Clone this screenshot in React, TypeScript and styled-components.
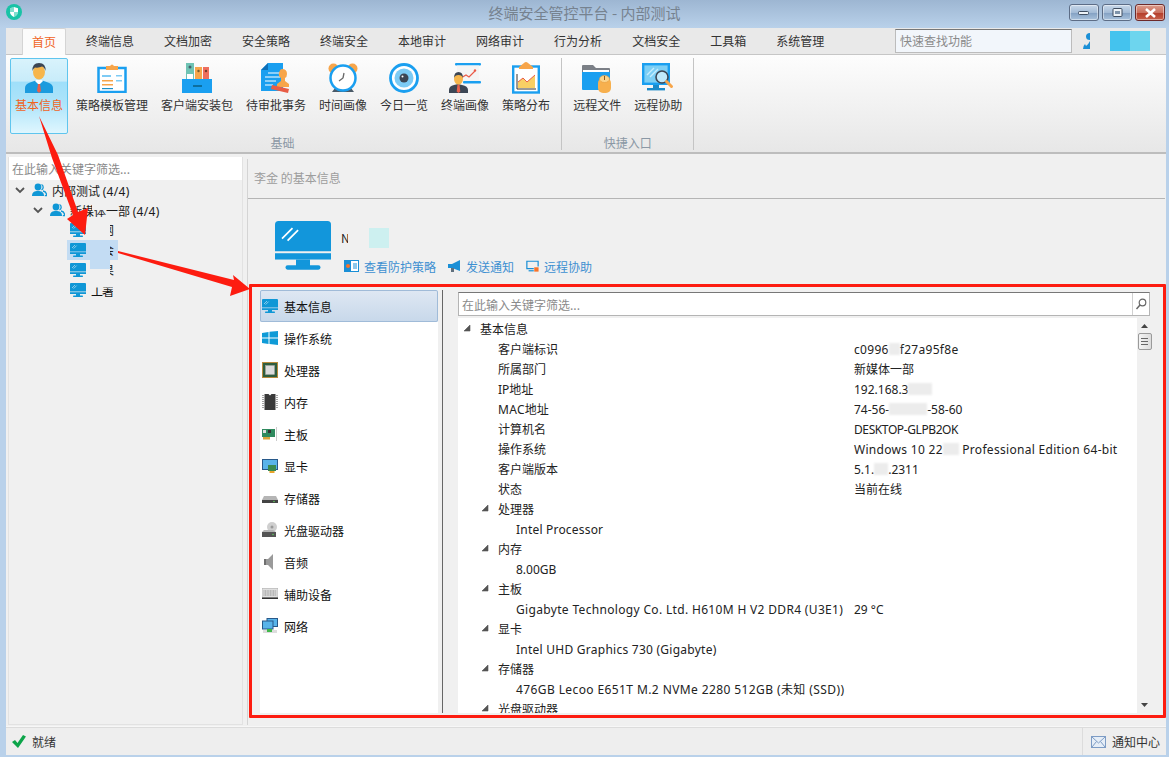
import React from "react";
import styled, { createGlobalStyle } from "styled-components";

const Global = createGlobalStyle`
  html, body { margin: 0; padding: 0; height: 100%; overflow: hidden; }
  body { font-family: "Noto Sans CJK SC", "Liberation Sans", sans-serif; font-size: 12px; color: #222; }
  * { box-sizing: border-box; }
`;

const Win = styled.div`
  position: relative; width: 1169px; height: 757px; display: flex; flex-direction: column;
  background: #b9d1ea; overflow: hidden;
`;
const TitleBar = styled.div`
  height: 28px; flex: none; display: flex; align-items: center; justify-content: space-between;
  padding: 0 4px 4px 6px; position: relative;
  background: linear-gradient(#9db6d2, #b9d1ea);
`;
const WinTitle = styled.div`
  position: absolute; left: 0; right: 0; top: 2px; text-align: center; font-size: 15px; line-height: 22px; color: #76828f;
`;
const WinButtons = styled.div`display: flex; gap: 3px; position: relative; margin-top: 1px;`;
const WinBtn = styled.div<{ $close?: boolean }>`
  width: 30px; height: 17px; border-radius: 3px; border: 1px solid ${p => (p.$close ? "#6d2a2a" : "#5d6d86")};
  display: flex; align-items: center; justify-content: center;
  background: ${p => p.$close ? "linear-gradient(#dd9c8c, #c9705e 50%, #b43f2c 55%, #c8604a)" : "linear-gradient(#c8d8ea, #a3bbd6 50%, #85a2c4 55%, #a9c2dc)"};
  box-shadow: inset 0 0 0 1px rgba(255,255,255,.45);
`;
const Body = styled.div`flex: 1; min-height: 0; margin: 0 3px 2px 6px; display: flex; flex-direction: column; background: #f0f0f0;`;
const TabBar = styled.div`
  height: 27px; flex: none; display: flex; align-items: flex-end; background: #e9e9e9; border-bottom: 1px solid #c6c6c6; padding-left: 16px; position: relative;
`;
const Tab = styled.div<{ $active?: boolean }>`
  height: ${p => (p.$active ? "27px" : "26px")}; line-height: 25px; padding: 0 ${p => (p.$active ? "10px" : "15px")};
  margin-right: ${p => (p.$active ? "5px" : "0")}; margin-bottom: ${p => (p.$active ? "-1px" : "0")};
  color: ${p => (p.$active ? "#f0641e" : "#333")};
  ${p => p.$active ? "background:#fbfbfb;border:1px solid #d4d4d4;border-bottom:none;border-radius:2px 2px 0 0;padding:0 9px;" : ""}
`;
const TabRight = styled.div`margin-left: auto; display: flex; align-items: center; height: 26px; padding-bottom: 1px;`;
const QuickFind = styled.div`
  width: 177px; height: 24px; margin-right: 11px; background: #f2f6fb; border: 1px solid #bcbcbc; border-top-color: #777; color: #8a8a8a; line-height: 21px; padding-left: 4px;
`;
const Patch = styled.div<{ $c: string; $w?: number; $h?: number }>`
  width: ${p => p.$w ?? 20}px; height: ${p => p.$h ?? 20}px; background: ${p => p.$c}; flex: none;
`;
const PatchGroup = styled.div`display: flex; margin: 0 16px 0 20px;`;

const Ribbon = styled.div`
  height: 99px; flex: none; display: flex; padding: 3px 0 0 4px; background: linear-gradient(#fdfdfd, #e7e7e7); border-bottom: 2px solid #bdbdbd;
`;
const RibbonGroup = styled.div`
  display: flex; flex-direction: column; align-items: stretch; height: 92px; padding-right: 6px; margin-right: 6px; border-right: 1px solid #c4c4c4;
`;
const RibbonItems = styled.div`display: flex; gap: 3px; height: 76px;`;
const GroupLabel = styled.div`text-align: center; color: #8b98a5; line-height: 18px; height: 16px;`;
const RibbonItem = styled.div<{ $active?: boolean }>`
  display: flex; flex-direction: column; align-items: center; height: 76px; padding: 3px 4px 0; border: 1px solid transparent; border-radius: 2px;
  color: #333; white-space: nowrap;
  ${p => p.$active ? `
    color: #f0641e; border-color: #5fc5ee;
    background: linear-gradient(#d9f3fc 0, #c8ecfa 30%, #9fdffa 31%, #ade4fa 60%, #dff6fe 100%);
  ` : ""}
`;
const RibbonIcon = styled.div`width: 34px; height: 32px; display: flex; align-items: center; justify-content: center;`;
const RibbonText = styled.div`line-height: 18px; margin-top: 2px;`;

const Main = styled.div`flex: 1; min-height: 0; display: flex; padding: 3px 1px 2px 2px; gap: 4px;`;
const LeftPanel = styled.div`width: 235px; flex: none; border: 1px solid #e2e2e2; border-top: none; background: #f0f0f0; display: flex; flex-direction: column;`;
const LeftFilter = styled.div`height: 23px; background: #fff; color: #8a8a8a; line-height: 23px; padding-left: 3px; flex: none;`;
const Tree = styled.div`padding-top: 0;`;
const TreeRow = styled.div<{ $level: number }>`
  position: relative; height: 20px; display: flex; align-items: center; padding-left: ${p => p.$level}px; white-space: pre; color: #1a1a1a;
`;
const TreeLabel = styled.span`line-height: 22px; height: 20px;`;
const Chevron = styled.svg`flex: none; margin-right: 7px;`;
const TreeIcon = styled.svg`flex: none; margin-right: 5px;`;
const Selection = styled.div`
  position: absolute; left: 58px; top: 0; width: 51px; height: 20px; background: #c3dcf3;
  &::after { content: ""; position: absolute; left: 23px; top: 9px; width: 20px; height: 20px; background: #c3dcf3; }
`;
const Clip = styled.span<{ $w: number; $left: number }>`
  display: inline-block; width: ${p => p.$w}px; overflow: hidden; margin-left: ${p => p.$left}px; position: relative; z-index: 1; line-height: 14px; height: 14px; color: #222;
  direction: rtl;
`;
const HostName = styled.span`margin-left: 5px; position: relative; z-index: 1; color: #111; letter-spacing: -1px; clip-path: inset(6px 0 0 0);`;
const GroupSmudge = styled.span`
  position: absolute; left: 83px; top: 2px; width: 18px; height: 8px; background: #f0f0f0;
`;
const Latin = styled.span<{ $t?: number }>`
  font-family: "Noto Sans", "Noto Sans CJK SC", sans-serif; letter-spacing: ${p => p.$t ?? 0}px;
  line-height: 16px;
`;

const RightPanel = styled.div`flex: 1; min-width: 0; display: flex; flex-direction: column; border-left: 1px solid #d4d4d4; margin-top: 2px;`;
const PanelHead = styled.div`height: 40px; flex: none; border-bottom: 1px solid #b5b5b5; color: #9d9d9d; line-height: 38px; padding-left: 6px;`;
const Profile = styled.div`height: 91px; flex: none; display: flex; padding: 22px 0 0 27px;`;
const ProfileCol = styled.div`display: flex; flex-direction: column; margin-left: 10px;`;
const NameRow = styled.div`display: flex; align-items: center; height: 30px; padding-top: 4px;`;
const NamePiece = styled.span`width: 7px; overflow: hidden; height: 18px; line-height: 17px; font-size: 12px; color: #222; margin-right: 21px; clip-path: inset(2px 0 2px 0);`;
const Actions = styled.div`display: flex; margin-top: 5px; padding-left: 3px; height: 20px; align-items: center;`;
const ActionLink = styled.div`display: flex; align-items: center; gap: 5px; color: #3d8fd1; margin-right: 12px; white-space: nowrap;`;
const Detail = styled.div`flex: 1; min-height: 0; display: flex; padding: 0 0 12px 12px;`;
const SideList = styled.div`width: 178px; flex: none; background: #fff; display: flex; flex-direction: column;`;
const SideItem = styled.div<{ $active?: boolean }>`
  height: 32px; flex: none; display: flex; align-items: center; gap: 6px; padding-left: 2px; color: #111; border-radius: 2px;
  ${p => p.$active ? "background:linear-gradient(#dfe8f3,#c7d8ea);box-shadow:inset 0 0 0 1px #a0bbd8;" : ""}
`;
const VLine = styled.div`width: 1px; flex: none; background: #666; margin: 0 15px 0 4px;`;
const RightCol = styled.div`flex: 1; min-width: 0; display: flex; flex-direction: column; padding-top: 2px; padding-right: 15px;`;
const Search = styled.div`
  height: 24px; flex: none; width: 692px; background: #fff; border: 1px solid #b4b4b4; border-top-color: #777; display: flex; align-items: center; justify-content: space-between; color: #8a8a8a; padding-left: 3px;
`;
const SearchBtn = styled.div`width: 17px; height: 22px; border-left: 1px solid #d0d0d0; display: flex; align-items: center; justify-content: center;`;
const ScrollWrap = styled.div`flex: 1; min-height: 0; display: flex; margin-top: 2px;`;
const InfoTree = styled.div`width: 679px; flex: none; background: #fff; overflow: hidden; `;
const InfoRow = styled.div`height: 20px; line-height: 22px; display: grid; grid-template-columns: 396px 1fr; grid-template-rows: 20px; align-items: start; white-space: pre; color: #222;`;
const InfoKey = styled.div<{ $level: number }>`padding-left: ${p => 22 + p.$level * 18}px; position: relative; height: 20px;`;
const InfoValue = styled.div`height: 20px;`;
const Expander = styled.svg`position: absolute; top: 6px; margin-left: -17px;`;
const Smudge = styled.span<{ $w: number }>`
  display: inline-block; width: ${p => p.$w}px; height: 12px; vertical-align: -1px; background: #ececec; filter: blur(1px);
`;
const Scrollbar = styled.div`width: 15px; flex: none; display: flex; flex-direction: column; align-items: center; padding-top: 6px; position: relative; background: #f0f0f0;`;
const ThumbBox = styled.div`
  width: 14px; height: 17px; margin-top: 5px; border: 1px solid #9a9a9a; border-radius: 2px; background: linear-gradient(90deg,#f4f4f4,#dcdcdc); display: flex; flex-direction: column; align-items: center; justify-content: center; gap: 2px;
  & > i { display: block; width: 7px; height: 1px; background: #666; }
`;
const ScrollDown = styled.svg`position: absolute; bottom: 6px; left: 4px;`;

const Status = styled.div`height: 28px; flex: none; background: #eeeeee; border-top: 1px solid #dcdcdc; display: flex; align-items: center; padding-left: 6px; box-shadow: 0 -1px 0 #f7f7f7;`;
const StatusText = styled.span`margin-left: 6px; color: #333;`;
const Notify = styled.div`margin-left: auto; height: 100%; width: 84px; border-left: 1px solid #dcdcdc; display: flex; align-items: center; gap: 6px; padding-left: 8px; color: #333; white-space: nowrap;`;

const RedFrame = styled.div`position: absolute; left: 249px; top: 284px; width: 917px; height: 434px; border: 3px solid #fd1c10; border-radius: 1px; pointer-events: none; z-index: 5;`;
const Arrows = styled.svg`position: absolute; left: 0; top: 0; z-index: 6; pointer-events: none;`;

const B = "#1a9ff0";
const Monitor = ({ s = 16, c = "#0f97d6" }: { s?: number; c?: string }) => (
  <svg width={s} height={s * 0.87} viewBox="0 0 16 13.9" style={{ flex: "none", position: "relative", zIndex: 1 }}>
    <path d="M0 1q0-1 1-1h14q1 0 1 1v7.600H0z" fill={c} />
    <path d="M2 5l3-3M3.600 5.600l3-3" stroke="#fff" strokeWidth=".5" />
    <rect y="9.200" width="16" height="1.800" fill={c} />
    <rect x="6" y="11" width="4" height="2" fill={c} />
    <rect x="3" y="12.600" width="10" height="1.300" rx=".6" fill={c} />
  </svg>
);
const People = () => (
  <TreeIcon width="15" height="14" viewBox="0 0 15 14">
    <circle cx="6" cy="4" r="3.400" fill="#0f97d6" />
    <path d="M0 13c0-4 2.500-5 6-5s6 1 6 5z" fill="#0f97d6" />
    <path d="M9.500 1.500a3 3 0 0 1 0 5.400M11 8c2.400.4 3.600 2 3.600 4.600h-1.800" fill="none" stroke="#0f97d6" strokeWidth="1.300" />
  </TreeIcon>
);
const Down = () => (
  <Chevron width="10" height="7" viewBox="0 0 10 7"><path d="M1 1l4 4 4-4" fill="none" stroke="#555" strokeWidth="1.800" /></Chevron>
);

const IPerson = () => (
  <svg width="30" height="30" viewBox="0 0 30 30">
    <path d="M1 30v-5q0-4 5-5.500l5-1.700h8l5 1.700q5 1.500 5 5.500v5z" fill="#1b9bde" />
    <path d="M11 18l4 4 4-4-1-1h-6z" fill="#fff" />
    <path d="M14 21h2l1 7-2 2-2-2z" fill="#e8604c" />
    <ellipse cx="15" cy="9" rx="6" ry="7.500" fill="#f6b64c" />
    <path d="M8.500 8q-.5-8 6.500-8t6.500 8q-1-4-3.500-4.500-3 1.500-7 1-2 1-2.500 3.500z" fill="#3c4654" />
  </svg>
);
const IClip = () => (
  <svg width="30" height="30" viewBox="0 0 30 30">
    <rect x="1.500" y="5" width="27" height="24" fill="#fff" stroke={B} strokeWidth="2.500" />
    <path d="M9 7V3h4q2-3 4 0h4v4z" fill="#f7a54a" />
    <path d="M5 12h9v2H5z" fill="#7ecbf5" /><path d="M5 17h11v1.500H5z" fill="#f7a54a" /><path d="M5 21h11v1.500H5z" fill="#f7a54a" /><path d="M5 25h11v1.200H5z" fill="#1a8fc9" />
    <path d="M19 12h6v1.500h-6zM19 17h6v1.500h-6z" fill="#7ecbf5" />
  </svg>
);
const IBinder = () => (
  <svg width="30" height="30" viewBox="0 0 30 30">
    <rect x="4" y="0" width="8" height="18" fill="#6fc3b4" /><rect x="13" y="4" width="7" height="14" fill="#f7a54a" /><rect x="21" y="4" width="6" height="14" fill="#ee6e5e" />
    <circle cx="8" cy="4" r="1.500" fill="#45606a" /><circle cx="16.500" cy="8" r="1.200" fill="#7a5a2a" /><circle cx="24" cy="8" r="1.200" fill="#7a3a2a" />
    <rect x="5" y="11" width="6" height="5" fill="#fff" />
    <rect x="0" y="16" width="30" height="14" fill={B} /><rect x="11" y="22" width="9" height="2" fill="#0d6f9e" />
  </svg>
);
const IDoc = () => (
  <svg width="30" height="30" viewBox="0 0 30 30">
    <path d="M7 0h15v28H0V7z" fill={B} /><path d="M7 0v7H0z" fill="#0d6fb8" />
    <path d="M7 10h12M4 14h15M4 18h11M4 22h8" stroke="#fff" strokeWidth="1.200" />
    <path d="M21 6q5 0 5 5 0 3-2 4v3l4 3v3H16v-3l4-3v-3q-3-2-2-5 1-4 3-4z" fill="#f7a54a" />
    <path d="M11 22l17 4-1 4-17-4z" fill="#e85d46" />
  </svg>
);
const IClock = () => (
  <svg width="30" height="30" viewBox="0 0 30 30">
    <circle cx="5.500" cy="5.500" r="5" fill="#f7a54a" /><circle cx="24.500" cy="5.500" r="5" fill="#f7a54a" />
    <path d="M4 29l3-4h16l3 4z" fill="#4a5a68" />
    <circle cx="15" cy="15" r="12.500" fill="#fff" stroke={B} strokeWidth="2.500" />
    <path d="M15 15l-4 3M15 15l1-5" stroke="#6a6a6a" strokeWidth="1.300" />
  </svg>
);
const IEye = () => (
  <svg width="30" height="30" viewBox="0 0 30 30">
    <circle cx="15" cy="15" r="13.500" fill="#fff" stroke={B} strokeWidth="2.800" />
    <circle cx="15" cy="15" r="9.500" fill="#7ccbf5" /><circle cx="15" cy="15" r="4.500" fill="#3c4654" /><circle cx="13.500" cy="13.500" r="1" fill="#fff" />
  </svg>
);
const IPortrait = () => (
  <svg width="32" height="30" viewBox="0 0 32 30">
    <rect x="6" y="0" width="26" height="2.500" rx="1" fill={B} /><rect x="8" y="2.500" width="22" height="16" fill="#f4f4f4" /><rect x="14" y="18" width="18" height="2.500" rx="1" fill={B} />
    <path d="M12 15l5-3 3 2 6-6" fill="none" stroke="#ea5a48" strokeWidth="1.200" /><circle cx="26" cy="7.500" r="1.200" fill="#ea5a48" />
    <path d="M0 30v-3q0-4 5-5l4-1 4 1q6 1 6 5v3z" fill="#3c4654" /><path d="M8.500 21.500h2l.8 7-1.800 1.500-1.800-1.500z" fill="#e8604c" />
    <ellipse cx="9.500" cy="16" rx="4.500" ry="5.500" fill="#f6b64c" /><path d="M5 15q0-6 4.500-6T14 15q-1-3-4.500-3T5 15z" fill="#3c4654" />
  </svg>
);
const IChart = () => (
  <svg width="28" height="32" viewBox="0 0 28 32">
    <rect x="1.200" y="4.500" width="25.600" height="26" fill="#fff" stroke={B} strokeWidth="2.400" />
    <path d="M7 5l5-4q2-2 4 0l5 4v2H7z" fill="#f7a54a" />
    <path d="M5 27V12M5 27h19" stroke="#333" strokeWidth="1" />
    <path d="M6 26v-6l5-4 4 4 8-7v13z" fill="#f8cf64" /><path d="M6 20l5-4 4 4 8-7" fill="none" stroke="#ea5a48" strokeWidth="1" />
  </svg>
);
const IFolder = () => (
  <svg width="30" height="30" viewBox="0 0 30 30">
    <path d="M0 3q0-1 1-1h10l3 3h13q1 0 1 1v5H0z" fill="#7b7f86" /><rect x="1" y="7" width="26" height="4" fill="#fff" />
    <path d="M0 9h28v18H1q-1 0-1-1z" fill={B} />
    <rect x="16" y="15" width="13" height="15" rx="5" fill="#f7b04e" /><ellipse cx="22.500" cy="16" rx="5" ry="3.500" fill="#fbd38a" stroke="#e59a3c" strokeWidth=".6" /><rect x="22" y="13" width="1" height="4" fill="#8a5a1e" />
  </svg>
);
const IMonSearch = () => (
  <svg width="32" height="30" viewBox="0 0 32 30">
    <rect x="1.200" y="1.200" width="25.600" height="19.600" fill="#7ccff5" stroke={B} strokeWidth="2.400" />
    <path d="M5 12l7-7M8 14l8-8" stroke="#c6ecfc" strokeWidth="1.400" />
    <rect x="11" y="22" width="6" height="3" fill="#1a8ac9" /><rect x="5" y="25" width="18" height="2.400" fill="#1a8ac9" />
    <circle cx="20" cy="14" r="6" fill="#bfe9fb" stroke="#3c4654" strokeWidth="1.600" />
    <path d="M24.500 18.500l5 5" stroke="#f7a54a" strokeWidth="3" strokeLinecap="round" />
  </svg>
);

const SWindows = () => (
  <svg width="16" height="14" viewBox="0 0 16 14"><path d="M0 2l6.500-1v5.600H0zM7.500.8L16 0v6.600H7.500zM0 7.600h6.500V13L0 12zM7.500 7.600H16V14l-8.500-1z" fill="#0f9bd7" /></svg>
);
const SCpu = () => (
  <svg width="16" height="16" viewBox="0 0 16 16"><rect width="16" height="16" fill="#b88a3c" /><rect x="1" y="1" width="14" height="14" fill="#2f5e3e" /><rect x="3.500" y="3.500" width="9" height="9" fill="#dcdcdc" stroke="#aaa" strokeWidth=".5" /></svg>
);
const SRam = () => (
  <svg width="16" height="16" viewBox="0 0 16 16"><path d="M2.500 0h4l1.500 1.500L9.500 0h4v16h-11z" fill="#3a3a3a" /><path d="M1 1v14M15 1v14" stroke="#888" strokeWidth="1.500" strokeDasharray="1 1" /></svg>
);
const SBoard = () => (
  <svg width="16" height="16" viewBox="0 0 16 16"><rect x="0" y="3" width="13" height="8" fill="#2f8a5e" /><rect x="1" y="4" width="3" height="3" fill="#ddd" /><rect x="6" y="4" width="3" height="3" fill="#333" /><rect x="1" y="11" width="7" height="2.500" fill="#d8a43a" /><rect x="14" y="1" width="1" height="14" fill="#ccc" /></svg>
);
const SGpu = () => (
  <svg width="16" height="16" viewBox="0 0 16 16"><rect x=".5" y="1.500" width="15" height="10" fill="#59b4ea" stroke="#28598a" /><rect x="6" y="7" width="8" height="6" fill="#3a8a50" /><rect x="7.500" y="13" width="5" height="2" fill="#e8a42a" /></svg>
);
const SDisk = () => (
  <svg width="16" height="16" viewBox="0 0 16 16"><path d="M2 6h12l2 4v3H0v-3z" fill="#b5b5b5" /><rect y="10" width="16" height="3" fill="#444" /><circle cx="12" cy="11.500" r=".8" fill="#5ecb5e" /></svg>
);
const SOptical = () => (
  <svg width="16" height="16" viewBox="0 0 16 16"><circle cx="10" cy="5" r="5" fill="#cfcfcf" /><circle cx="10" cy="5" r="1.500" fill="#999" /><path d="M2 8h9l3 2H0z" fill="#b5b5b5" /><rect y="10" width="14" height="5" fill="#555" /><circle cx="11" cy="12.500" r=".8" fill="#5ecb5e" /></svg>
);
const SSpeaker = () => (
  <svg width="16" height="16" viewBox="0 0 16 16"><path d="M2 5h4l5-5v16l-5-5H2z" fill="#9a9a9a" /><rect x="2" y="5" width="2" height="6" fill="#6f6f6f" /></svg>
);
const SKeyboard = () => (
  <svg width="16" height="16" viewBox="0 0 16 16"><rect y="2.500" width="16" height="9" fill="#e0e0e0" stroke="#a8a8a8" strokeWidth=".6" /><path d="M1.500 5h13M1.500 7h13M1.500 9h13" stroke="#888" strokeDasharray="1 .6" /><rect y="11.500" width="16" height="1.500" fill="#333" /></svg>
);
const SNet = () => (
  <svg width="16" height="16" viewBox="0 0 16 16"><rect x="5" y=".5" width="10.500" height="8" fill="#59b4ea" stroke="#28598a" /><rect x=".5" y="3" width="10.500" height="8" fill="#59b4ea" stroke="#28598a" /><rect x="1" y="12" width="14" height="3" fill="#ddd" /><rect x="5" y="11" width="5" height="3" fill="#3fb84a" /></svg>
);

const sideItems: [string, React.ReactNode][] = [
  ["基本信息", <Monitor key="m" />], ["操作系统", <SWindows />], ["处理器", <SCpu />], ["内存", <SRam />], ["主板", <SBoard />], ["显卡", <SGpu />],
  ["存储器", <SDisk />], ["光盘驱动器", <SOptical />], ["音频", <SSpeaker />], ["辅助设备", <SKeyboard />], ["网络", <SNet />],
];

type Row = { k: React.ReactNode; v?: React.ReactNode; l: number; e?: boolean };
const rows: Row[] = [
  { k: "基本信息", l: 0, e: true },
  { k: "客户端标识", l: 1, v: <Latin $t={.3}>c0996<Smudge $w={11} />f27a95f8e</Latin> },
  { k: "所属部门", l: 1, v: "新媒体一部" },
  { k: <><Latin>IP</Latin>地址</>, l: 1, v: <Latin>192.168.3<Smudge $w={24} /></Latin> },
  { k: <><Latin $t={.3}>MAC</Latin>地址</>, l: 1, v: <Latin>74-56-<Smudge $w={38} />-58-60</Latin> },
  { k: "计算机名", l: 1, v: <Latin $t={-.4}>DESKTOP-GLPB2OK</Latin> },
  { k: "操作系统", l: 1, v: <Latin $t={.3}>Windows 10 22<Smudge $w={16} /> Professional Edition 64-bit</Latin> },
  { k: "客户端版本", l: 1, v: <Latin>5.1.<Smudge $w={14} />.2311</Latin> },
  { k: "状态", l: 1, v: "当前在线" },
  { k: "处理器", l: 1, e: true },
  { k: <Latin $t={.2}>Intel Processor</Latin>, l: 2 },
  { k: "内存", l: 1, e: true },
  { k: <Latin>8.00GB</Latin>, l: 2 },
  { k: "主板", l: 1, e: true },
  { k: <Latin $t={.33}>Gigabyte Technology Co. Ltd. H610M H V2 DDR4 (U3E1)</Latin>, l: 2, v: <Latin>29 °C</Latin> },
  { k: "显卡", l: 1, e: true },
  { k: <Latin $t={.25}>Intel UHD Graphics 730 (Gigabyte)</Latin>, l: 2 },
  { k: "存储器", l: 1, e: true },
  { k: <Latin $t={.4}>476GB Lecoo E651T M.2 NVMe 2280 512GB (未知 (SSD))</Latin>, l: 2 },
  { k: "光盘驱动器", l: 1, e: true },
];

const ribbon1: [string, React.ReactNode, boolean?][] = [
  ["基本信息", <IPerson />, true], ["策略模板管理", <IClip />], ["客户端安装包", <IBinder />], ["待审批事务", <IDoc />],
  ["时间画像", <IClock />], ["今日一览", <IEye />], ["终端画像", <IPortrait />], ["策略分布", <IChart />],
];
const ribbon2: [string, React.ReactNode][] = [["远程文件", <IFolder />], ["远程协助", <IMonSearch />]];
const tabs = ["终端信息", "文档加密", "安全策略", "终端安全", "本地审计", "网络审计", "行为分析", "文档安全", "工具箱", "系统管理"];

export default function App() {
  return (
    <Win>
      <Global />
      <TitleBar>
        <WinTitle>终端安全管控平台 - 内部测试</WinTitle>
        <svg width="16" height="16" viewBox="0 0 16 16" style={{ position: "relative" }}>
          <circle cx="8" cy="8" r="8" fill="#19c3a6" />
          <path d="M8 3l4 1.300v3.700q0 3-4 5-4-2-4-5V4.300z" fill="#fff" />
          <path d="M8 3v5H4v-3.700zM8 8h4q0 3-4 5z" fill="#19c3a6" opacity=".55" />
        </svg>
        <WinButtons>
          <WinBtn><svg width="12" height="6"><rect x=".5" y="1.500" width="10" height="3" rx="1" fill="#eef3f8" stroke="#3f4d60" /></svg></WinBtn>
          <WinBtn><svg width="11" height="9"><rect x="1" y=".5" width="9" height="8" rx="1" fill="#eef3f8" stroke="#3f4d60" /><rect x="3" y="3" width="5" height="3" fill="#7e93aa" /></svg></WinBtn>
          <WinBtn $close><svg width="13" height="10" viewBox="0 0 13 10"><path d="M2 1l9 8M11 1l-9 8" stroke="#fff" strokeWidth="2.600" /></svg></WinBtn>
        </WinButtons>
      </TitleBar>
      <Body>
        <TabBar>
          <Tab $active>首页</Tab>
          {tabs.map(t => <Tab key={t}>{t}</Tab>)}
          <TabRight>
            <QuickFind>快速查找功能</QuickFind>
            <svg width="7" height="16" viewBox="0 0 7 16"><path d="M7 0v7Q3 7 3 3.500T7 0zM7 8v8H0q0-3 2-5l1 2q2-1 4-5z" fill="#1a8fd6" /></svg>
            <PatchGroup><Patch $c="#44c3ee" /><Patch $c="#6dd5ee" /></PatchGroup>
          </TabRight>
        </TabBar>
        <Ribbon>
          <RibbonGroup>
            <RibbonItems>
              {ribbon1.map(([t, ic, a]) => (
                <RibbonItem key={t} $active={a}><RibbonIcon>{ic}</RibbonIcon><RibbonText>{t}</RibbonText></RibbonItem>
              ))}
            </RibbonItems>
            <GroupLabel>基础</GroupLabel>
          </RibbonGroup>
          <RibbonGroup>
            <RibbonItems>
              {ribbon2.map(([t, ic]) => (
                <RibbonItem key={t}><RibbonIcon>{ic}</RibbonIcon><RibbonText>{t}</RibbonText></RibbonItem>
              ))}
            </RibbonItems>
            <GroupLabel>快捷入口</GroupLabel>
          </RibbonGroup>
        </Ribbon>
        <Main>
          <LeftPanel>
            <LeftFilter>在此输入关键字筛选...</LeftFilter>
            <Tree>
              <TreeRow $level={6}><Down /><People /><TreeLabel>内部测试 <Latin $t={.3}>(4/4)</Latin></TreeLabel></TreeRow>
              <TreeRow $level={24}><Down /><People /><TreeLabel>新媒体一部 <Latin $t={.3}>(4/4)</Latin></TreeLabel><GroupSmudge /></TreeRow>
              <TreeRow $level={61}><Monitor /><Clip $w={4} $left={24}>网</Clip></TreeRow>
              <TreeRow $level={61}><Selection /><Monitor /><Clip $w={4} $left={24}>会</Clip></TreeRow>
              <TreeRow $level={61}><Monitor /><Clip $w={4} $left={24}>果</Clip></TreeRow>
              <TreeRow $level={61}><Monitor /><HostName>工署</HostName></TreeRow>
            </Tree>
          </LeftPanel>
          <RightPanel>
            <PanelHead>李金 的基本信息</PanelHead>
            <Profile>
              <Monitor s={56} c="#1296db" />
              <ProfileCol>
                <NameRow>
                  <NamePiece>N</NamePiece>
                  <Patch $c="#cdf0f0" />
                </NameRow>
                <Actions>
                  <ActionLink>
                    <svg width="15" height="12" viewBox="0 0 15 12"><rect width="15" height="12" fill="#1a8fd6" /><rect x="1" y="1" width="13" height="10" fill="#fff" /><rect x="1" y="1" width="6" height="10" fill="#1a8fd6" /><circle cx="4" cy="6" r="2" fill="#f7732a" /><path d="M9 4h4M9 6h4M9 8h4" stroke="#1a8fd6" /></svg>
                    查看防护策略
                  </ActionLink>
                  <ActionLink>
                    <svg width="13" height="13" viewBox="0 0 13 13"><path d="M0 4h4l8-4v11L4 8H0z" fill="#1a8fd6" /><rect x="3" y="8" width="3" height="4" fill="#60707e" /></svg>
                    发送通知
                  </ActionLink>
                  <ActionLink>
                    <svg width="13" height="12" viewBox="0 0 15 13"><path d="M9 9.500H1V1h13v6" fill="none" stroke="#1a8fd6" strokeWidth="1.400" /><path d="M3 12h6" stroke="#1a8fd6" strokeWidth="1.400" /><rect x="9.500" y="8" width="5" height="5" fill="#f7732a" /></svg>
                    远程协助
                  </ActionLink>
                </Actions>
              </ProfileCol>
            </Profile>
            <Detail>
              <SideList>
                {sideItems.map(([t, ic], i) => <SideItem key={t} $active={i === 0}>{ic}{t}</SideItem>)}
              </SideList>
              <VLine />
              <RightCol>
                <Search>在此输入关键字筛选...
                  <SearchBtn><svg width="12" height="12" viewBox="0 0 12 12"><circle cx="7.500" cy="4.500" r="3.300" fill="none" stroke="#666" strokeWidth="1.200" /><path d="M5 7l-3.500 4" stroke="#666" strokeWidth="1.500" /></svg></SearchBtn>
                </Search>
                <ScrollWrap>
                  <InfoTree>
                    {rows.map((r, i) => (
                      <InfoRow key={i}>
                        <InfoKey $level={r.l}>
                          {r.e && <Expander width="8" height="8" viewBox="0 0 8 8"><path d="M7 1v6H1z" fill="#555" stroke="#555" strokeWidth=".6" /></Expander>}
                          {r.k}
                        </InfoKey>
                        <InfoValue>{r.v}</InfoValue>
                      </InfoRow>
                    ))}
                  </InfoTree>
                  <Scrollbar>
                    <svg width="7" height="4" viewBox="0 0 7 4"><path d="M3.500 0L7 4H0z" fill="#444" /></svg>
                    <ThumbBox><i /><i /><i /></ThumbBox>
                    <ScrollDown width="7" height="4" viewBox="0 0 7 4"><path d="M3.500 4L7 0H0z" fill="#444" /></ScrollDown>
                  </Scrollbar>
                </ScrollWrap>
              </RightCol>
            </Detail>
          </RightPanel>
        </Main>
        <Status>
          <svg width="14" height="13" viewBox="0 0 14 13"><path d="M0 7l3-2 2.500 3L11 0l3 1.500L6 13z" fill="#0da54a" /></svg>
          <StatusText>就绪</StatusText>
          <Notify>
            <svg width="15" height="12" viewBox="0 0 15 12"><rect x=".5" y=".5" width="14" height="11" fill="#e6eef7" stroke="#7d9cc5" /><path d="M1 1l6.500 6L14 1M1 11l4.500-5.500M14 11L9.500 5.500" fill="none" stroke="#7d9cc5" /></svg>
            通知中心
          </Notify>
        </Status>
      </Body>
      <RedFrame />
      <Arrows width="1169" height="757" viewBox="0 0 1169 757">
        <path d="M39 116L58 155L78 212L88 208L85 235L67 219L73 215L52 158z" fill="#fd1c10" />
        <path d="M118 251L234 280L233 275L250 289L230 296L232 287L118 253z" fill="#fd1c10" />
      </Arrows>
    </Win>
  );
}
